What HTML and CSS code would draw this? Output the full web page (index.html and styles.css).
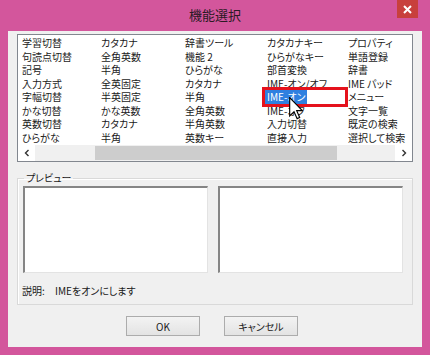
FILE: index.html
```html
<!DOCTYPE html>
<html lang="ja">
<head>
  <meta charset="UTF-8">
  <title>機能選択</title>
  <link rel="stylesheet" href="styles.css">
</head>
<body>

<div class="window">
  <!-- タイトルバー -->
  <div class="titlebar">
    <span></span>
    <span class="title">機能選択</span>
    <span class="close">
      <svg width="9" height="9" viewBox="0 0 9 9"><path d="M1 1 L8 8 M8 1 L1 8" stroke="#fff" stroke-width="2"/></svg>
    </span>
  </div>

  <div class="client">
    <!-- 機能リスト -->
    <div class="listbox">
      <div class="items">
        <span>学習切替</span>
        <span>句読点切替</span>
        <span>記号</span>
        <span>入力方式</span>
        <span>字幅切替</span>
        <span>かな切替</span>
        <span>英数切替</span>
        <span>ひらがな</span>

        <span>カタカナ</span>
        <span>全角英数</span>
        <span>半角</span>
        <span>全英固定</span>
        <span>半英固定</span>
        <span>かな英数</span>
        <span>カタカナ</span>
        <span>半角</span>

        <span>辞書ツール</span>
        <span>機能 2</span>
        <span>ひらがな</span>
        <span>カタカナ</span>
        <span>半角</span>
        <span>全角英数</span>
        <span>半角英数</span>
        <span>英数キー</span>

        <span>カタカナキー</span>
        <span>ひらがなキー</span>
        <span>部首変換</span>
        <span>IME-オン/オフ</span>
        <span><b class="selected">IME-オン</b></span>
        <span>IME-オフ</span>
        <span>入力切替</span>
        <span>直接入力</span>

        <span>プロパティ</span>
        <span>単語登録</span>
        <span>辞書</span>
        <span>IME パッド</span>
        <span>メニュー</span>
        <span>文字一覧</span>
        <span>既定の検索</span>
        <span>選択して検索</span>
      </div>

      <div class="hscroll">
        <span class="arrow">
          <svg width="6" height="8" viewBox="0 0 6 8"><path d="M4.5 1 L1.5 4 L4.5 7" fill="none" stroke="#333" stroke-width="1.4"/></svg>
        </span>
        <div class="track"><div class="thumb"></div></div>
        <span class="arrow">
          <svg width="6" height="8" viewBox="0 0 6 8"><path d="M1.5 1 L4.5 4 L1.5 7" fill="none" stroke="#333" stroke-width="1.4"/></svg>
        </span>
      </div>

      <!-- 注目枠とマウスカーソル -->
      <div class="mark"></div>
      <svg class="pointer" width="14" height="23" viewBox="0 0 12 20">
        <path d="M0.5 0.5 L0.5 16.5 L4.3 12.8 L7 18.8 L9.2 17.8 L6.6 11.9 L11.5 11.9 Z" fill="#fff" stroke="#000" stroke-width="1" stroke-linejoin="miter"/>
      </svg>
    </div>

    <!-- プレビュー -->
    <fieldset class="group">
      <legend>プレビュー</legend>
      <div class="previews">
        <div class="preview"></div>
        <div class="preview"></div>
      </div>
      <div class="desc">
        <span class="desc-label">説明:</span>
        <span>IMEをオンにします</span>
      </div>
    </fieldset>

    <div class="buttons">
      <button>OK</button>
      <button>キャンセル</button>
    </div>
  </div>
</div>

</body>
</html>
```

FILE: styles.css
```css
body {
  margin: 0;
  font-family: "Noto Sans CJK JP", "Noto Sans", sans-serif;
  font-size: 10px;
  font-feature-settings: "palt";
  color: #1a1a1a;
}

.window {
  width: 430px;
  height: 355px;
  background: #d3569c;
  display: flex;
  flex-direction: column;
}

.titlebar {
  height: 31px;
  display: grid;
  grid-template-columns: 1fr auto 1fr;
}

.title {
  font-size: 13px;
  line-height: 30px;
  color: #2a1a24;
}

.close {
  justify-self: end;
  margin-right: 12px;
  width: 21px;
  height: 18px;
  background: #c8403d;
  display: flex;
  align-items: center;
  justify-content: center;
}

.client {
  margin: 0 8px;
  height: 316px;
  background: #f0f0f0;
  padding-top: 3px;
  box-sizing: border-box;
}

/* リスト */
.listbox {
  position: relative;
  margin: 0 9px;
  height: 128px;
  box-sizing: border-box;
  border: 1px solid #82878f;
  background: #fff;
  display: flex;
  flex-direction: column;
}

.items {
  flex: 1;
  padding: 1px 0 0 2px;
  display: grid;
  grid-template-columns: 79px 84px 82px 81px 1fr;
  grid-template-rows: repeat(8, 13.5px);
  grid-auto-flow: column;
  line-height: 13.5px;
  white-space: nowrap;
  overflow: hidden;
}

.items span {
  padding-left: 2px;
}

.selected {
  font-weight: normal;
  display: inline-block;
  margin-left: -2px;
  padding: 0 1px 0 2px;
  background: #2f80e0;
  color: #fff;
}

.hscroll {
  height: 16px;
  display: flex;
  align-items: stretch;
}

.arrow {
  width: 17px;
  display: flex;
  align-items: center;
  justify-content: center;
}

.track {
  flex: 1;
  background: #f0f0f0;
  display: flex;
  align-items: center;
}

.thumb {
  margin-left: 60px;
  width: 242px;
  height: 14px;
  background: #cdcdcd;
}

.mark {
  position: absolute;
  left: 244px;
  top: 52px;
  width: 80px;
  height: 14px;
  border: 3px solid #e5121c;
}

.pointer {
  position: absolute;
  left: 271px;
  top: 62px;
}

/* プレビュー */
.group {
  margin: 9px 9px 0;
  padding: 0 0 6px 0;
  border: 1px solid #d9d9d9;
  box-shadow: inset 1px 1px 0 #fff;
}

.group legend {
  margin-left: 6px;
  padding: 0 2px;
  line-height: 14px;
}

.previews {
  display: flex;
  gap: 10px;
  padding: 1px 0 0 5px;
}

.preview {
  width: 182px;
  height: 84px;
  background: #fff;
  border-top: 2px solid #858585;
  border-left: 2px solid #858585;
  border-right: 1px solid #e3e3e3;
  border-bottom: 1px solid #e3e3e3;
}

.desc {
  margin-top: 11px;
  padding-left: 4px;
  display: flex;
  line-height: 14px;
}

.desc-label {
  width: 33px;
}

.buttons {
  display: flex;
  justify-content: center;
  gap: 24px;
  margin-top: 11px;
  padding-right: 6px;
}

button {
  width: 74px;
  height: 20px;
  padding: 0;
  font-family: inherit;
  font-size: 10px;
  font-feature-settings: "palt";
  color: #1a1a1a;
  border: 1px solid #acacac;
  border-radius: 0;
  background: linear-gradient(#f3f3f3, #e3e3e3);
}
```
